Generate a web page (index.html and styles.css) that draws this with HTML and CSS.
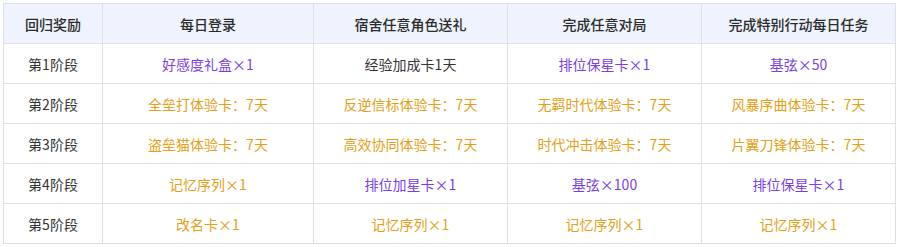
FILE: index.html
```html
<!DOCTYPE html>
<html lang="zh">
<head>
<meta charset="utf-8">
<link rel="stylesheet" href="styles.css">
</head>
<body>
<table class="rewards">
  <colgroup>
    <col class="c1"><col class="c2"><col class="c3"><col class="c3"><col class="c3">
  </colgroup>
  <thead>
    <tr><th>回归奖励</th><th>每日登录</th><th>宿舍任意角色送礼</th><th>完成任意对局</th><th>完成特别行动每日任务</th></tr>
  </thead>
  <tbody>
    <tr><td>第1阶段</td><td class="p">好感度礼盒×1</td><td>经验加成卡1天</td><td class="p">排位保星卡×1</td><td class="p">基弦×50</td></tr>
    <tr><td>第2阶段</td><td class="o">全垒打体验卡：7天</td><td class="o">反逆信标体验卡：7天</td><td class="o">无羁时代体验卡：7天</td><td class="o">风暴序曲体验卡：7天</td></tr>
    <tr><td>第3阶段</td><td class="o">盗垒猫体验卡：7天</td><td class="o">高效协同体验卡：7天</td><td class="o">时代冲击体验卡：7天</td><td class="o">片翼刀锋体验卡：7天</td></tr>
    <tr><td>第4阶段</td><td class="o">记忆序列×1</td><td class="p">排位加星卡×1</td><td class="p">基弦×100</td><td class="p">排位保星卡×1</td></tr>
    <tr><td>第5阶段</td><td class="o">改名卡×1</td><td class="o">记忆序列×1</td><td class="o">记忆序列×1</td><td class="o">记忆序列×1</td></tr>
  </tbody>
</table>
</body>
</html>
```
FILE: styles.css
```css
html, body { margin: 0; padding: 0; background: #fff; }
body { padding: 3px; font-family: "Noto Sans CJK SC", "Noto Sans", sans-serif; }
.rewards {
  border-collapse: collapse;
  table-layout: fixed;
  width: 893px;
  font-size: 14px;
  color: #333;
}
.rewards .c1 { width: 99px; }
.rewards .c2 { width: 211px; }
.rewards .c3 { width: 194px; }
.rewards th, .rewards td {
  border: 1px solid #dcdfe6;
  height: 39px;
  padding: 0;
  text-align: center;
  vertical-align: middle;
  line-height: 20px;
}
.rewards th {
  background: #eef3fd;
  font-weight: 500;
  color: #2b2b2b;
}
.rewards td.p { color: #7a3fe3; }
.rewards td.o { color: #e3a018; }
```
